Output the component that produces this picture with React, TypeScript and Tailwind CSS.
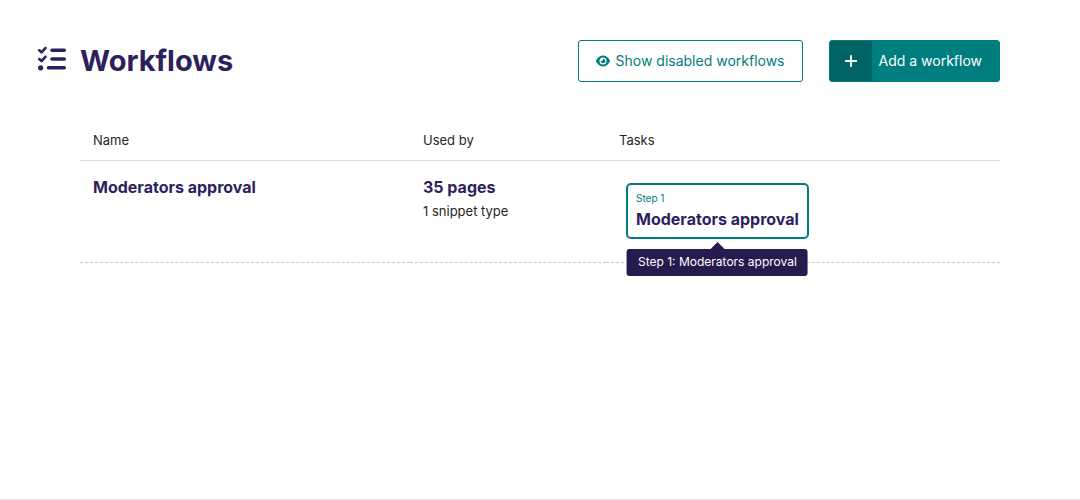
import React from "react";
import { FaEye, FaListCheck } from "react-icons/fa6";

function PlusIcon() {
  return (
    <svg viewBox="0 0 14 14" className="size-3.5" aria-hidden="true">
      <path d="M7 1.8v10.4M1.8 7h10.4" stroke="currentColor" strokeWidth="1.8" strokeLinecap="round" />
    </svg>
  );
}

function Header() {
  return (
    <header className="flex items-center pr-20 pl-[38px]">
      <FaListCheck className="mr-3.5 mb-1 size-7 shrink-0 text-[#2e1f5e]" aria-hidden="true" />
      <h1 className="grow text-[29px] leading-10 font-bold text-[#2e1f5e]">Workflows</h1>
      <div className="flex gap-[26px] text-sm">
        <a
          href="#disabled"
          className="flex h-[42px] items-center gap-1.5 rounded-[3px] border border-[#007d7e] px-[17px] text-[#007d7e]"
        >
          <FaEye className="size-3.5" aria-hidden="true" />
          Show disabled workflows
        </a>
        <a
          href="#add"
          className="flex h-[42px] items-center overflow-hidden rounded-[3px] border border-[#007d7e] bg-[#007d7e] pr-[17px] text-white"
        >
          <span className="mr-[7px] flex h-full w-[42px] items-center justify-center bg-[#006465]">
            <PlusIcon />
          </span>
          Add a workflow
        </a>
      </div>
    </header>
  );
}

function TaskStep() {
  return (
    <div className="relative ml-[7px] w-fit">
      <a
        href="#task"
        aria-describedby="task-tip"
        className="block h-14 rounded-[5px] border-2 border-[#007d7e] px-2 pt-1.5"
      >
        <span className="mb-0.5 block text-[10px] leading-[14px] text-[#007d7e]">Step 1</span>
        <span className="block text-base leading-6 font-bold text-[#2e1f5e]">Moderators approval</span>
      </a>
      <div
        id="task-tip"
        role="tooltip"
        className="absolute top-full left-1/2 mt-2.5 -translate-x-1/2 rounded-[3px] bg-[#261a4e] px-[11px] pb-0.5 text-xs leading-[25px] whitespace-nowrap text-white"
      >
        <svg viewBox="0 0 14 7" className="absolute bottom-full left-1/2 h-[7px] w-3.5 -translate-x-1/2" aria-hidden="true">
          <path d="M0 7 7 0l7 7z" fill="#261a4e" />
        </svg>
        Step 1: Moderators approval
      </div>
    </div>
  );
}

export default function App() {
  return (
    <div className="flex min-h-screen flex-col border-b border-[#e0e0e0] bg-white font-['Inter','Liberation_Sans',sans-serif] text-[#262626]">
      <main className="pt-10">
        <Header />
        <div className="mt-10 px-20">
          <table className="w-full table-fixed border-collapse text-left text-[13px]">
            <colgroup>
              <col className="w-[330px]" />
              <col className="w-[196px]" />
              <col />
            </colgroup>
            <thead>
              <tr className="border-b border-[#e0e0e0]">
                <th className="h-[38px] px-[13px] font-normal">Name</th>
                <th className="px-[13px] font-normal">Used by</th>
                <th className="px-[13px] font-normal">Tasks</th>
              </tr>
            </thead>
            <tbody>
              <tr className="h-[102px] border-b border-dashed border-[#c8c8c8] align-top">
                <td className="px-[13px] pt-[14px]">
                  <a href="#workflow" className="text-base leading-6 font-bold text-[#2e1f5e]">
                    Moderators approval
                  </a>
                </td>
                <td className="px-[13px] pt-[14px]">
                  <a href="#pages" className="block text-base leading-6 font-bold text-[#2e1f5e]">
                    35 pages
                  </a>
                  <a href="#snippets" className="block leading-6">
                    1 snippet type
                  </a>
                </td>
                <td className="px-[13px] pt-[22px]">
                  <TaskStep />
                </td>
              </tr>
            </tbody>
          </table>
        </div>
      </main>
    </div>
  );
}
